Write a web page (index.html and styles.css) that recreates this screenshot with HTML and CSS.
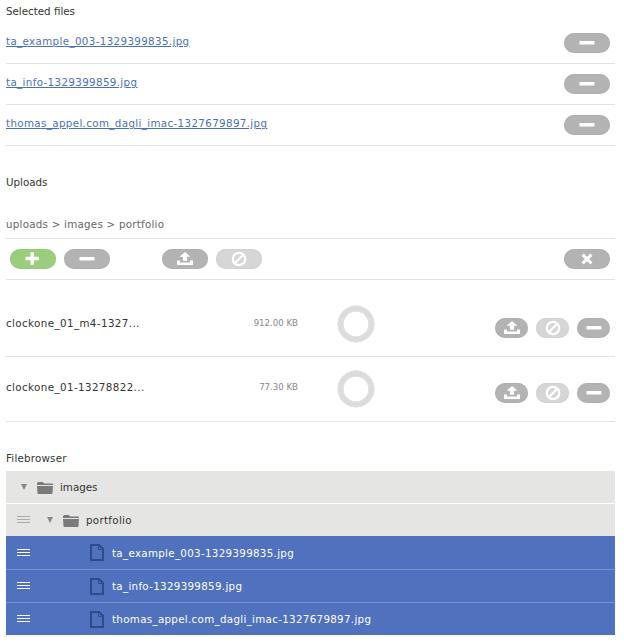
FILE: index.html
```html
<!DOCTYPE html>
<html>
<head>
<meta charset="utf-8">
<title>Files</title>
<link rel="stylesheet" href="styles.css">
</head>
<body>
<svg class="defs" width="0" height="0" aria-hidden="true">
  <symbol id="i-minus" viewBox="0 0 46 20"><rect x="15.500" y="8" width="15" height="3.600" rx="0.5" fill="#fff"/></symbol>
  <symbol id="i-plus" viewBox="0 0 46 20"><path d="M15.500 7.800h5v-4.500h3.400v4.500h5v3.400h-5v4.500h-3.400v-4.500h-5z" fill="#fff"/></symbol>
  <symbol id="i-x" viewBox="0 0 46 20"><path d="M17.500 6.700l2.200-2.200 3.300 3.300 3.300-3.300 2.200 2.200-3.300 3.300 3.300 3.300-2.200 2.200-3.300-3.300-3.300 3.300-2.200-2.200 3.300-3.300z" fill="#fff"/></symbol>
  <symbol id="i-up" viewBox="0 0 46 20"><path d="M23 3l5.500 4.800h-3.400v4h-4.200v-4h-3.400z M15 11.500h3v2h10v-2h3v4.500h-16z" fill="#fff"/></symbol>
  <symbol id="i-no" viewBox="0 0 46 20"><circle cx="23" cy="10" r="6.200" fill="none" stroke="#fff" stroke-width="2.200"/><path d="M18.800 14.200l8.400-8.400" stroke="#fff" stroke-width="2.200"/></symbol>
  <symbol id="i-folder" viewBox="0 0 16 13"><path d="M0 2.500Q0 1 1.500 1H6l1 1.500h8q1 0 1 1V4H0z M0 5h16l-.5 7q0 1-1 1h-13q-1 0-1-1z" fill="#7a7a7a"/></symbol>
  <symbol id="i-file" viewBox="0 0 14 17"><path d="M1 1h8l4 4v11H1z" fill="none" stroke="#2f4c88" stroke-width="2"/><path d="M8.500 1v4.500H13" fill="none" stroke="#2f4c88" stroke-width="1"/></symbol>
  <symbol id="i-grip" viewBox="0 0 13 8"><path d="M0 .5h13M0 3.500h13M0 6.500h13" stroke="currentColor" fill="none"/></symbol>
</svg>

<section class="selected">
  <h2 class="label">Selected files</h2>
  <div class="sel-row"><a class="link" href="#">ta_example_003-1329399835.jpg</a><button class="pill"><svg class="ic"><use href="#i-minus"/></svg></button></div>
  <div class="sel-row"><a class="link" href="#">ta_info-1329399859.jpg</a><button class="pill"><svg class="ic"><use href="#i-minus"/></svg></button></div>
  <div class="sel-row"><a class="link" href="#">thomas_appel.com_dagli_imac-1327679897.jpg</a><button class="pill"><svg class="ic"><use href="#i-minus"/></svg></button></div>
</section>

<section class="uploads">
  <h2 class="label">Uploads</h2>
  <div class="crumbs">uploads &gt; images &gt; portfolio</div>
  <div class="toolbar">
    <button class="pill green"><svg class="ic"><use href="#i-plus"/></svg></button>
    <button class="pill"><svg class="ic"><use href="#i-minus"/></svg></button>
    <button class="pill gap-left"><svg class="ic"><use href="#i-up"/></svg></button>
    <button class="pill faint"><svg class="ic"><use href="#i-no"/></svg></button>
    <button class="pill push"><svg class="ic"><use href="#i-x"/></svg></button>
  </div>
  <div class="up-row first">
    <span class="up-name">clockone_01_m4-1327...</span>
    <span class="up-size">912.00 KB</span>
    <span class="ring"></span>
    <span class="up-actions">
      <button class="pill small"><svg class="ic"><use href="#i-up"/></svg></button>
      <button class="pill small faint"><svg class="ic"><use href="#i-no"/></svg></button>
      <button class="pill small"><svg class="ic"><use href="#i-minus"/></svg></button>
    </span>
  </div>
  <div class="up-row second">
    <span class="up-name">clockone_01-13278822...</span>
    <span class="up-size">77.30 KB</span>
    <span class="ring"></span>
    <span class="up-actions">
      <button class="pill small"><svg class="ic"><use href="#i-up"/></svg></button>
      <button class="pill small faint"><svg class="ic"><use href="#i-no"/></svg></button>
      <button class="pill small"><svg class="ic"><use href="#i-minus"/></svg></button>
    </span>
  </div>
</section>

<section class="browser">
  <h2 class="label">Filebrowser</h2>
  <div class="tree">
    <div class="node folder root"><span class="tri"></span><svg class="folder-ic"><use href="#i-folder"/></svg><span class="fname">images</span></div>
    <div class="node folder sub"><svg class="grip"><use href="#i-grip"/></svg><span class="tri"></span><svg class="folder-ic"><use href="#i-folder"/></svg><span class="fname">portfolio</span></div>
    <div class="node file top"><svg class="grip"><use href="#i-grip"/></svg><svg class="file-ic"><use href="#i-file"/></svg><span class="fname">ta_example_003-1329399835.jpg</span></div>
    <div class="node file"><svg class="grip"><use href="#i-grip"/></svg><svg class="file-ic"><use href="#i-file"/></svg><span class="fname">ta_info-1329399859.jpg</span></div>
    <div class="node file last"><svg class="grip"><use href="#i-grip"/></svg><svg class="file-ic"><use href="#i-file"/></svg><span class="fname">thomas_appel.com_dagli_imac-1327679897.jpg</span></div>
  </div>
</section>
</body>
</html>
```

FILE: styles.css
```css
* { box-sizing: border-box; }
html, body { margin: 0; padding: 0; }
body {
  width: 624px;
  height: 643px;
  padding: 0 9px 0 6px;
  overflow: hidden;
  background: #fff;
  color: #333;
  font: 10.3px/14px "DejaVu Sans", sans-serif;
}
.defs { position: absolute; }
.label { margin: 0; font: inherit; color: #333; }
.selected .label { padding-top: 4px; height: 23px; }

.sel-row {
  height: 41px;
  display: flex;
  align-items: flex-start;
  justify-content: space-between;
  padding: 10px 5px 0 0;
  border-bottom: 1px solid #e4e4e4;
}
.link { margin-top: 1px; color: #4c6fbd; text-decoration: underline; letter-spacing: .36px; }

.pill {
  display: block;
  flex: none;
  width: 46px;
  height: 20px;
  margin: 0;
  padding: 0;
  border: 0;
  border-radius: 10px;
  overflow: hidden;
  background: #b3b3b3;
  box-shadow: inset 0 0 1px rgba(0, 0, 0, .2);
}
.pill.small { width: 33px; }
.pill.green { background: #9ace7c; }
.pill.faint { background: #d6d6d6; }
.ic { display: block; width: 46px; height: 20px; }
.pill.small .ic { margin-left: -6.500px; }

.uploads { padding-top: 29px; }
.uploads .label { height: 14px; line-height: 14px; }
.crumbs { margin-top: 28px; height: 21px; color: #666; letter-spacing: .25px; }
.toolbar {
  display: flex;
  gap: 8px;
  height: 42px;
  padding: 10px 5px 0 4px;
  border-top: 1px solid #e4e4e4;
  border-bottom: 1px solid #e4e4e4;
}
.gap-left { margin-left: 44px; }
.push { margin-left: auto; }

.up-row {
  display: grid;
  grid-template-columns: 232px 60px 100px 1fr;
  border-bottom: 1px solid #e4e4e4;
}
.up-row.first { height: 77px; }
.up-row.second { height: 65px; }
.up-name { grid-column: 1; color: #333; letter-spacing: .4px; }
.up-size { grid-column: 2; text-align: right; font-size: 8.600px; color: #888; }
.ring {
  width: 36px;
  height: 36px;
  margin-left: 40px;
  border: 5px solid #dcdcdc;
  border-radius: 50%;
  box-shadow: 0 0 0 .5px #cfcfcf, inset 0 0 0 .5px #cfcfcf;
}
.up-actions { display: flex; gap: 8px; justify-content: flex-end; padding-right: 5px; }
.first .up-name, .first .up-size { margin-top: 36px; }
.first .ring { margin-top: 26px; }
.first .up-actions { margin-top: 38px; }
.second .up-name, .second .up-size { margin-top: 23px; }
.second .ring { margin-top: 14px; }
.second .up-actions { margin-top: 26px; }

.browser { padding-top: 30px; }
.browser .label { height: 13px; line-height: 13px; letter-spacing: .2px; }
.tree { margin-top: 6px; }
.node {
  display: flex;
  align-items: center;
  height: 33px;
  border-bottom: 1px solid #fff;
}
.node.folder { background: #e5e5e3; color: #333; }
.node.file { background: #5071bd; color: #fff; border-bottom-color: #7a93cf; }
.node.sub { height: 32px; border-bottom: 0; }
.node.top { height: 34px; }
.node.last { height: 32px; border-bottom: 0; }
.fname { letter-spacing: .31px; }
.root .fname { letter-spacing: 0; }
.tri {
  flex: none;
  width: 0;
  height: 0;
  border-left: 3px solid transparent;
  border-right: 3px solid transparent;
  border-top: 6px solid #888;
}
.root .tri { margin-left: 15px; margin-right: 10px; }
.sub .tri { margin-left: 17px; margin-right: 10px; }
.grip { width: 13px; height: 8px; margin-left: 11px; color: #aaa; flex: none; }
.file .grip { color: #fff; }
.folder-ic { width: 16px; height: 13px; margin-right: 7px; flex: none; }
.file-ic { width: 14px; height: 17px; margin-left: 60px; margin-right: 8px; flex: none; }
```
